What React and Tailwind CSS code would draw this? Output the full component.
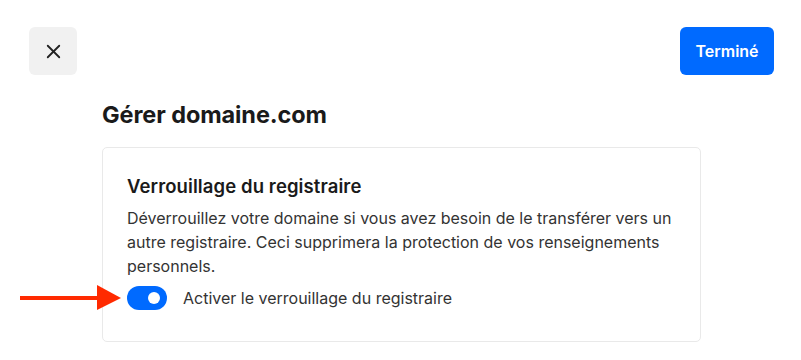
import React, { useState } from 'react';
import { X } from 'lucide-react';

export default function App() {
  const [locked, setLocked] = useState(true);

  return (
    <div className="w-[801px] h-[360px] bg-white overflow-hidden font-['Inter',sans-serif] text-[#1f1f1f] relative">
      <header className="flex justify-between items-start pt-[27px] pl-[29px] pr-[27px]">
        <button className="w-12 h-12 rounded-[6px] bg-[#f1f1f1] flex items-center justify-center text-[#222]">
          <X size={23} strokeWidth={1.9} />
        </button>
        <button className="h-12 w-[94px] rounded-[6px] bg-[#006aff] text-white text-[16px] font-semibold">
          Terminé
        </button>
      </header>

      <main className="pl-[102px] pr-[100px]">
        <h1 className="mt-[26px] text-[23.5px] leading-[28px] font-bold text-[#1a1a1a] tracking-[-0.1px]">
          Gérer domaine.com
        </h1>

        <section className="mt-[18px] border border-[#e9e9e9] rounded-[5px] pt-[24px] pb-[31px] px-[24px]">
          <h2 className="text-[18.5px] leading-[28px] font-semibold text-[#1a1a1a] tracking-[0.1px]">
            Verrouillage du registraire
          </h2>
          <p className="mt-[6px] text-[16px] leading-[24px] text-[#333] max-w-[560px]">
            Déverrouillez votre domaine si vous avez besoin de le transférer vers un autre registraire. Ceci supprimera la protection de vos renseignements personnels.
          </p>
          <div className="mt-[8px] flex items-center gap-4 relative">
            <button
              onClick={() => setLocked(!locked)}
              className={locked ? 'w-10 h-6 rounded-full bg-[#006aff] flex items-center justify-end pr-[7px]' : 'w-10 h-6 rounded-full bg-[#ccc] flex items-center justify-start pl-[7px]'}
            >
              <span className="w-3 h-3 rounded-full bg-white" />
            </button>
            <span className="text-[16px] text-[#333]">Activer le verrouillage du registraire</span>

            <svg className="absolute left-[-107px] top-[-1px]" width="101" height="26" viewBox="0 0 101 26">
              <rect x="0" y="11" width="79" height="4" fill="#ff2a00" />
              <polygon points="77,0 101,13 77,25" fill="#ff2a00" />
            </svg>
          </div>
        </section>
      </main>
    </div>
  );
}
